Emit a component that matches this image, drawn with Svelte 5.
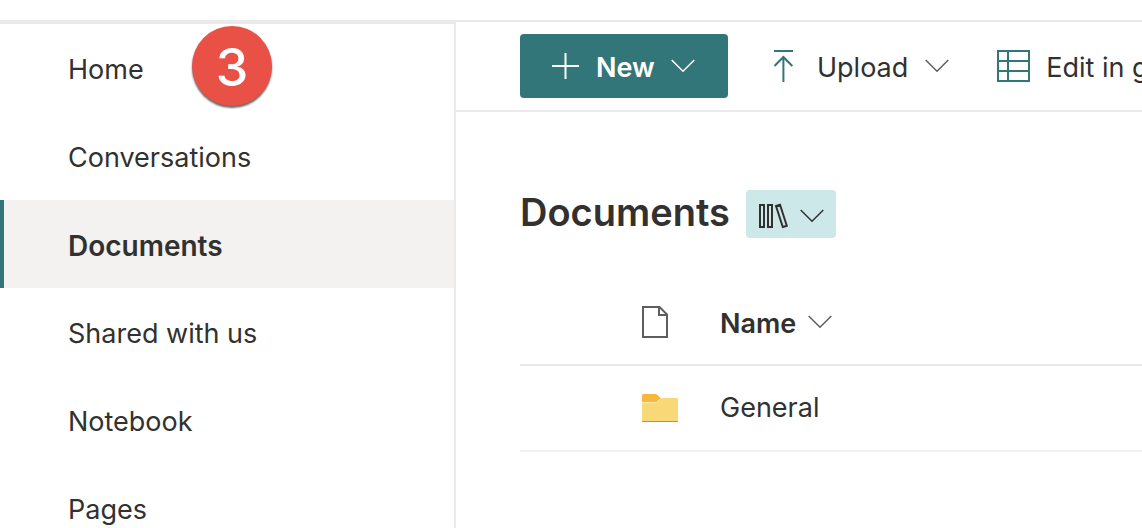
<script>
  const links = ['Home', 'Conversations', 'Documents', 'Shared with us', 'Notebook', 'Pages'];
  let current = $state('Documents');
</script>

{#snippet chevron()}
  <svg class="chevron" width="24" height="14" viewBox="0 0 24 14" aria-hidden="true">
    <path d="M.7 1 12 12.3 23.3 1" />
  </svg>
{/snippet}

<div class="page">
  <div class="top"></div>
  <div class="body">
    <nav class="side" aria-label="Site">
      {#each links as link}
        <a
          href="#{link}"
          class:current={link === current}
          aria-current={link === current ? 'page' : undefined}
          onclick={() => (current = link)}
        >
          <span class="label">{link}</span>
          {#if link === 'Home'}<span class="badge">3</span>{/if}
        </a>
      {/each}
    </nav>

    <main>
      <div class="commands">
        <button class="new">
          <svg width="28" height="28" viewBox="0 0 28 28" aria-hidden="true">
            <path d="M0 14h27M13.5 1v26" />
          </svg>
          <span class="label">New</span>
          {@render chevron()}
        </button>
        <button class="command">
          <svg width="32" height="32" viewBox="0 0 32 32" aria-hidden="true">
            <path d="M6 1h19M15.4 32V7M6.5 16l8.9-9 8.9 9" />
          </svg>
          <span class="label">Upload</span>
          {@render chevron()}
        </button>
        <button class="command">
          <svg width="32" height="32" viewBox="0 0 32 32" aria-hidden="true">
            <path d="M0 1h33M0 11h33M0 21h33M0 31h33M1 0v32M11 1v30M32 0v32" />
          </svg>
          <span class="label">Edit in grid view</span>
        </button>
      </div>

      <section class="library">
        <div class="heading">
          <h1>Documents</h1>
          <button class="switch" aria-label="Switch library">
            <svg width="30" height="28" viewBox="0 0 30 28" aria-hidden="true">
              <path d="M2 3h4v22H2zM10 3h4v22h-4zM18 4l4-1.200 6.800 21-4 1.200z" />
            </svg>
            {@render chevron()}
          </button>
        </div>

        <table>
          <thead>
            <tr>
              <th class="type" scope="col" aria-label="File type">
                <svg width="28" height="32" viewBox="0 0 28 32" aria-hidden="true">
                  <path d="M1 1h16.500L25 8.500V31H1zM17 1v8h8" />
                </svg>
              </th>
              <th scope="col">
                <button class="sort"><span class="label">Name</span> {@render chevron()}</button>
              </th>
            </tr>
          </thead>
          <tbody>
            <tr>
              <td class="type">
                <svg class="folder" width="36" height="32" viewBox="0 0 36 32" aria-hidden="true">
                  <path fill="#f6b73c" d="M0 3.500Q0 2 1.500 2H13q1.500 0 2.500 1l3.500 3.500V14H0z" />
                  <path fill="#f9d878" d="M0 11h13q1.500 0 2.500-1l3-3q1-1 2.500-1H35q1 0 1 1v22q0 1-1 1H1q-1 0-1-1z" />
                  <path fill="none" stroke="#fbe9b0" d="M0 10.500h13q1.500 0 2.500-1l2.500-2.500" />
                  <path fill="#d98232" d="M0 29h36q0 1-1 1H1q-1 0-1-1z" />
                </svg>
              </td>
              <td><a class="file" href="#General">General</a></td>
            </tr>
          </tbody>
        </table>
      </section>
    </main>
  </div>
</div>

<style>
  :global(body) {
    margin: 0;
    background: #fff;
  }

  .page {
    height: 100vh;
    overflow: hidden;
    display: flex;
    flex-direction: column;
    color: #323130;
    font: 27px/40px Inter, sans-serif;
  }

  .page :is(button, a) {
    color: inherit;
    font: inherit;
    text-decoration: none;
  }

  button {
    border: 0;
    padding: 0;
    background: none;
    display: flex;
    align-items: center;
    cursor: pointer;
    white-space: nowrap;
  }

  svg {
    flex: none;
    overflow: visible;
    fill: none;
    stroke: currentColor;
    stroke-width: 2;
  }

  .chevron {
    stroke-width: 1.5;
  }

  .label {
    padding-top: 4px;
  }

  .top {
    flex: none;
    height: 20px;
    border-bottom: 2px solid #eaeaea;
  }

  .body {
    flex: 1;
    min-height: 0;
    display: flex;
  }

  .side {
    flex: 0 0 40%;
    max-width: 456px;
    box-sizing: border-box;
    border-top: 2px solid #eaeaea;
    border-right: 2px solid #eaeaea;
  }

  .side a {
    position: relative;
    display: flex;
    align-items: center;
    height: 88px;
    padding-left: 64px;
    border-left: 4px solid transparent;
  }

  .page .side .current {
    background: #f3f2f1;
    border-left-color: #33767a;
    font-size: 28px;
    font-weight: 600;
  }

  .badge {
    position: absolute;
    top: 2px;
    left: 188px;
    width: 80px;
    height: 80px;
    border-radius: 50%;
    background: #e95147;
    box-shadow: 0 2px 2px rgba(0, 0, 0, 0.6);
    color: #fff;
    font-size: 52px;
    font-weight: 500;
    line-height: 84px;
    text-align: center;
  }

  main {
    flex: 1;
    min-width: 0;
    overflow: hidden;
  }

  .commands {
    display: flex;
    align-items: center;
    gap: 32px;
    height: 88px;
    padding-left: 64px;
    border-bottom: 2px solid #eaeaea;
  }

  .commands button {
    flex: none;
    height: 64px;
  }

  .page .new {
    gap: 16px;
    min-width: 208px;
    padding: 0 32px;
    border-radius: 4px;
    background: #33767a;
    color: #fff;
    font-weight: 600;
  }

  .command {
    gap: 17px;
    padding: 0 8px;
  }

  .command svg:first-child {
    stroke: #33767a;
  }

  .command .chevron,
  .sort .chevron {
    stroke: #605e5c;
  }

  .library {
    padding: 72px 0 0 64px;
  }

  .heading {
    display: flex;
    align-items: center;
    gap: 16px;
    height: 60px;
  }

  h1 {
    margin: 0;
    padding-bottom: 4px;
    font-size: 38px;
    font-weight: 600;
    line-height: 56px;
  }

  .switch {
    gap: 12px;
    height: 48px;
    padding: 4px 12px 0;
    border-radius: 4px;
    background: #cce8e8;
  }

  table {
    width: 100%;
    margin-top: 36px;
    border-collapse: collapse;
    table-layout: fixed;
  }

  th,
  td {
    height: 84px;
    padding: 0;
    border-bottom: 2px solid #eaeaea;
    text-align: left;
    font-weight: 400;
  }

  td {
    border-bottom-color: #f3f2f1;
  }

  .type {
    width: 78px;
    padding-left: 122px;
  }

  .type svg {
    display: block;
    color: #605e5c;
  }

  .type .folder {
    stroke-width: 1;
    stroke: none;
  }

  .page .sort {
    gap: 12px;
    font-weight: 600;
  }
</style>
